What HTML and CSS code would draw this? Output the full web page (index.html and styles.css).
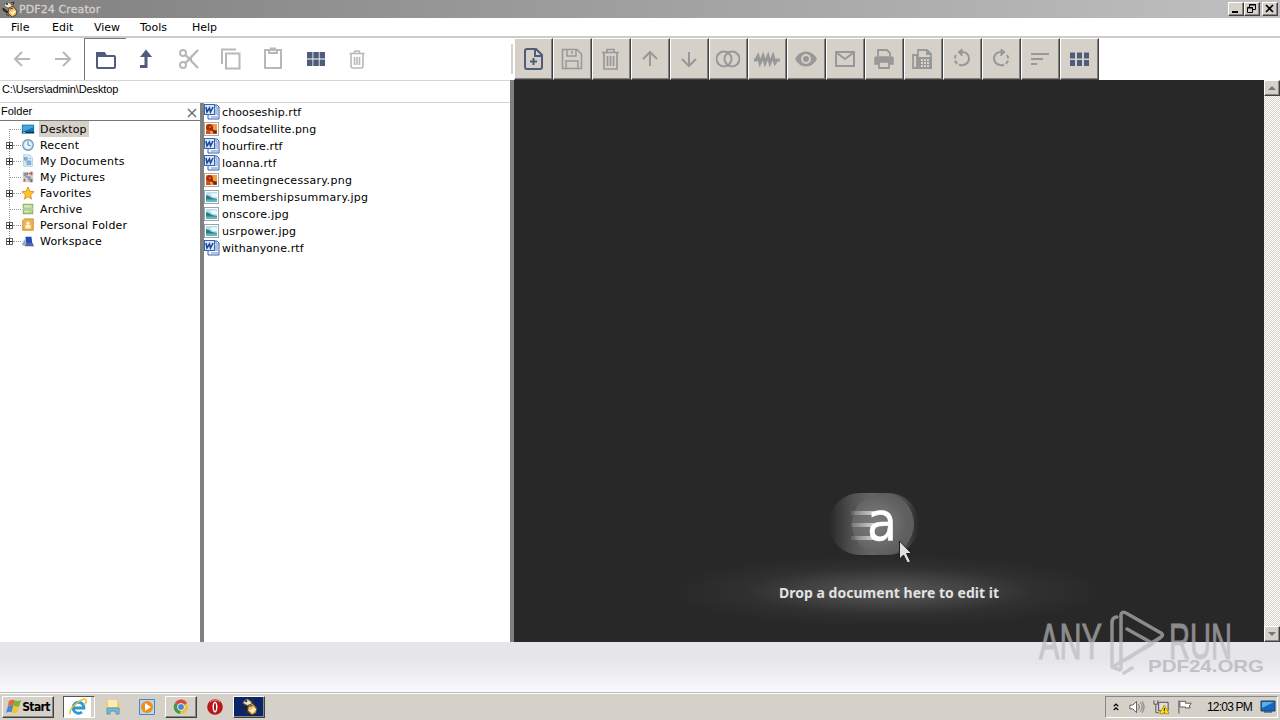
FILE: index.html
```
<!DOCTYPE html>
<html lang="en">
<head>
  <meta charset="UTF-8" />
  <title>PDF24 Creator</title>
  <link rel="stylesheet" href="styles.css">
</head>
<body>

  <!-- Shared icons -->
  <svg class="defs">
    <symbol id="bee" viewBox="0 0 16 16">
      <path d="M3 3l3-2 3 2 2 3-5 1-4-2z" fill="#eee6d5" stroke="#776b55"/>
      <path d="M7 7l4-2 4 5-1 4-4 2-4-4z" fill="#e9bd68" stroke="#65451e"/>
      <path d="M1 7l5 4-1 1-4-3zM8 8l3-1" fill="#222" stroke="#2b2118" stroke-width=".8"/>
      <circle cx="5" cy="3" r="1" fill="#222"/>
      <path d="M9 2l3-1-1 3M4 13l3 2" fill="none" stroke="#3d3023"/>
      <path d="M8 12l4-3 2 2-3 3z" fill="#fff0b4"/>
    </symbol>
    <symbol id="word" viewBox="0 0 16 16">
      <path d="M5 1h8l2 2v12H4V3z" fill="#edf4ff" stroke="#3c62a5"/>
      <path d="M12 1v3h3M11 6h3M11 8h3M11 10h3M7 13h7" fill="none" stroke="#6f91cb"/>
      <rect x=".5" y=".5" width="10" height="10" fill="#d9e7fb" stroke="#3864ae"/>
      <path d="M2 3l1 5 2.500-4 1 4L9 3" fill="none" stroke="#1d4797" stroke-width="1.500"/>
    </symbol>
    <symbol id="png" viewBox="0 0 16 16">
      <rect x=".5" y="1.5" width="14" height="13" fill="#fff" stroke="#aaa"/>
      <rect x="2" y="3" width="11" height="10" fill="#f0a13c"/>
      <circle cx="5.500" cy="6.500" r="3.5" fill="#b52b0c"/>
      <path d="M7 7l3 4M10 10h2v2h-2z" fill="#5c170b" stroke="#7b2410" stroke-width="1.5"/>
      <circle cx="6" cy="6" r="1" fill="#e5732a"/>
      <path d="M2 10l3-1 2 4H2z" fill="#d54c18"/>
    </symbol>
    <symbol id="jpg" viewBox="0 0 16 16">
      <rect x=".5" y="1.5" width="14" height="13" fill="#fff" stroke="#9ba4aa"/>
      <rect x="2" y="3" width="11" height="10" fill="#b5dff0"/>
      <path d="M2 6l3 1 3 2 5 1v1H2z" fill="#267f83"/>
      <path d="M2 10.500h11V13H2z" fill="#64b7c5"/>
      <path d="M6 5l4-1 3 1v3H9z" fill="#ecf9fc"/>
    </symbol>
    <symbol id="desk" viewBox="0 0 16 16">
      <path d="M1 3h14v10H1z" fill="#1677b5"/>
      <path d="M2 4h12v2L2 11z" fill="#45a9df"/>
      <path d="M1 12h14" stroke="#0a3965" stroke-width="2"/>
      <path d="M2 12h3" stroke="#b6e38b"/>
    </symbol>
  </svg>

  <header class="titlebar">
    <svg class="app-icon"><use href="#bee"/></svg>
    <h1>PDF24 Creator</h1>
    <div class="window-buttons">
      <button><svg viewBox="0 0 16 14"><path d="M4 10h6" stroke="#000" stroke-width="2"/></svg></button>
      <button><svg viewBox="0 0 16 14"><path d="M5.5 5V2.500h6v5H9M5 3h7M3.500 5.500h5v5h-5zM3 6h6" fill="none" stroke="#000"/></svg></button>
      <button><svg viewBox="0 0 16 14"><path d="M4 3l7 7M11 3l-7 7" stroke="#000" stroke-width="1.7"/></svg></button>
    </div>
  </header>

  <nav class="menu">
    <span>File</span><span>Edit</span><span>View</span><span>Tools</span><span>Help</span>
  </nav>

  <main class="workspace">
    <section class="browser">
      <div class="file-toolbar">
        <button class="muted"><svg viewBox="0 0 24 24"><path d="M21 12H6M13 5l-7 7 7 7"/></svg></button>
        <button class="muted"><svg viewBox="0 0 24 24"><path d="M4 12h15M12 5l7 7-7 7"/></svg></button>
        <button class="pressed"><svg viewBox="0 0 24 24"><path d="M4 5h6l2 3h8q1 0 1 1v10q0 1-1 1H4q-1 0-1-1V6q0-1 1-1z"/><path d="M3 5h7l2 3H3z" fill="currentColor"/></svg></button>
        <button><svg viewBox="0 0 24 24"><path d="M5 19.500h6V8" stroke-width="3"/><path d="M7 9l4-5 4 5z" fill="currentColor"/></svg></button>
        <button class="muted"><svg viewBox="0 0 24 24"><circle cx="6" cy="6" r="3"/><circle cx="6" cy="18" r="3"/><path d="M8.5 8L21 21M8.5 16L21 3M14 12h1" stroke-width="2.4"/></svg></button>
        <button class="muted"><svg viewBox="0 0 24 24"><path d="M3 17V2.500h14M7 6.500h13.500v15H7z"/></svg></button>
        <button class="muted"><svg viewBox="0 0 24 24"><path d="M4 3h16v18H4zM8 3v3h8V3M10 3V1.500h4V3"/></svg></button>
        <button><svg viewBox="0 0 24 24"><path d="M4 5h5.500v6.500H4zM10.300 5h5.500v6.500h-5.500zM16.600 5H22v6.500h-5.400zM4 12.500h5.500V19H4zM10.300 12.500h5.500V19h-5.500zM16.600 12.500H22V19h-5.400z" fill="currentColor" stroke="none"/></svg></button>
        <button class="muted"><svg viewBox="0 0 24 24"><path d="M4.500 6.500h15M6 7v12q0 2 2 2h8q2 0 2-2V7M9 6l1-2h4l1 2M9.500 10v8M12 10v8M14.500 10v8" stroke-width="1.6"/></svg></button>
        <i class="grip"></i>
      </div>
      <div class="path">C:\Users\admin\Desktop</div>
      <div class="panes">
        <aside class="folders">
          <div class="folder-head"><span>Folder</span><svg viewBox="0 0 10 10"><path d="M1 1l8 8M9 1L1 9" stroke="#667277" stroke-width="1.5"/></svg></div>
          <ul class="tree">
            <li class="selected"><i></i><svg><use href="#desk"/></svg><span>Desktop</span></li>
            <li class="expand"><i></i><svg viewBox="0 0 16 16"><circle cx="8" cy="8" r="6" fill="#c9e3f2" stroke="#719cb5" stroke-width="1.5"/><circle cx="8" cy="8" r="4" fill="#edf8ff"/><path d="M8 4v4l3 1" fill="none" stroke="#286a9a"/></svg><span>Recent</span></li>
            <li class="expand"><i></i><svg viewBox="0 0 16 16"><path d="M3 1h7l3 3v10H3z" fill="#d9ecf5" stroke="#b1c7d3"/><path d="M4 4h3v3H4zM7 8h4v4H7zM5 9h1M9 5h2" fill="#8ab8df" stroke="#6f9fca"/></svg><span>My Documents</span></li>
            <li><i></i><svg viewBox="0 0 16 16"><path d="M2 2h12v12H2z" fill="#d7d4cf"/><path d="M3 3h3v4H3zM8 7h3v5H8z" fill="#8096b4"/><path d="M12 2v4M7 3v3M4 10v3M12 10v4" stroke="#b66055" stroke-width="2"/><path d="M5 8h3M9 4h2M10 13h2" stroke="#476793"/></svg><span>My Pictures</span></li>
            <li class="expand"><i></i><svg viewBox="0 0 16 16"><path d="M8 1l2 5 5 .500-4 3.500 1 5-4-3-4 3 1-5-4-3.500L6 6z" fill="#ffc329" stroke="#d88e17"/></svg><span>Favorites</span></li>
            <li><i></i><svg viewBox="0 0 16 16"><path d="M2 2h12v12H2z" fill="#7fac5a"/><path d="M3 3h10v4H3z" fill="#c3dd9d"/><path d="M3 9h10v4H3z" fill="#b6d58d"/><path d="M2 8h12M4 5h5M4 11h5" stroke="#edf6df"/></svg><span>Archive</span></li>
            <li class="expand"><i></i><svg viewBox="0 0 16 16"><path d="M4 1h10v13H2V3z" fill="#edb34f" stroke="#cf8828"/><path d="M5 12V8h6v4z" fill="#fff5d8"/><circle cx="8" cy="6" r="2" fill="#fff5d8"/></svg><span>Personal Folder</span></li>
            <li class="expand"><i></i><svg viewBox="0 0 16 16"><path d="M5 3h7l1 9H6z" fill="#254bb7"/><path d="M1 12l3-6 4 7H2z" fill="#9caac0"/><path d="M4 14h11l-2-4H7z" fill="#5265a4"/></svg><span>Workspace</span></li>
          </ul>
        </aside>
        <i class="splitter"></i>
        <ul class="files">
          <li><svg><use href="#word"/></svg><span>chooseship.rtf</span></li>
          <li><svg><use href="#png"/></svg><span>foodsatellite.png</span></li>
          <li><svg><use href="#word"/></svg><span>hourfire.rtf</span></li>
          <li><svg><use href="#word"/></svg><span>loanna.rtf</span></li>
          <li class="wide"><svg><use href="#png"/></svg><span>meetingnecessary.png</span></li>
          <li class="wide"><svg><use href="#jpg"/></svg><span>membershipsummary.jpg</span></li>
          <li class="wide"><svg><use href="#jpg"/></svg><span>onscore.jpg</span></li>
          <li class="wide"><svg><use href="#jpg"/></svg><span>usrpower.jpg</span></li>
          <li><svg><use href="#word"/></svg><span>withanyone.rtf</span></li>
        </ul>
      </div>
    </section>

    <div class="main-splitter"></div>

    <section class="editor">
      <div class="edit-toolbar">
        <button class="active"><svg viewBox="0 0 24 24"><path d="M6 2h9l6 6v12q0 2-2 2H6q-2 0-2-2V4q0-2 2-2zM14 2v7h7M12.500 11v7M9 14.500h7"/></svg></button>
        <button><svg viewBox="0 0 24 24"><path d="M2.500 2.500H17l4.500 4.500v14.500h-19zM7 3v6h9V3M6 21v-7h12v7M12 4v3" stroke-width="1.500"/></svg></button>
        <button><svg viewBox="0 0 24 24"><path d="M3 5.500h17M5 5v17h13V5M8 5V2.500h7V5M8.500 9v10M11.500 9v10M14.500 9v10" stroke-width="1.700"/></svg></button>
        <button><svg viewBox="0 0 24 24"><path d="M12 19V5M5 12l7-7 7 7"/></svg></button>
        <button><svg viewBox="0 0 24 24"><path d="M12 5v14M5 12l7 7 7-7"/></svg></button>
        <button><svg viewBox="0 0 24 24"><circle cx="8" cy="12" r="7.500"/><circle cx="16" cy="12" r="7.500"/></svg></button>
        <button><svg class="wave" viewBox="0 0 28 24"><path d="M1 13h2l2-4 2 7 3-7 2 7 3-7 2 7 3-7 2 7 2-3h3" stroke-width="3"/></svg></button>
        <button><svg viewBox="0 0 24 24"><path d="M1 12q4-7.500 11-7.500T23 12q-4 7.500-11 7.500T1 12z" fill="currentColor" stroke="none"/><circle cx="12" cy="12" r="5" fill="#d5d0c8" stroke="none"/><circle cx="12" cy="12" r="3" fill="currentColor" stroke="none"/></svg></button>
        <button><svg viewBox="0 0 24 24"><path d="M3 5h18v14H3zM4 6l8 6 8-6"/></svg></button>
        <button><svg viewBox="0 0 24 24"><path d="M6 9V3h9l3 3v3M7 15v6h10v-6" stroke-width="1.800"/><path d="M3 11q0-1 1-1h16q1 0 1 1v6h-3v-2H6v2H3z" fill="currentColor" stroke-width="1.500"/></svg></button>
        <button><svg viewBox="0 0 24 24"><path d="M2 8h4v13H2zM7 10V3h9l4 4v14H7zM16 3v4h4" stroke-width="1.800"/><path d="M8 11h12v9H8z" fill="currentColor"/><path d="M10 13h8M10 16h8M10 19h8" stroke="#d5d0c8" stroke-dasharray="2 1"/></svg></button>
        <button><svg viewBox="0 0 24 24"><path d="M9 5h3a6.500 6.500 0 0 1 1 13"/><path d="M13 18A6.500 6.500 0 0 1 6 8" stroke-dasharray="4 2"/><path d="M12 2L8 5l4 4z" fill="currentColor" stroke-width="1"/></svg></button>
        <button><svg viewBox="0 0 24 24"><path d="M15 5h-3a6.500 6.500 0 0 0-1 13"/><path d="M11 18a6.500 6.500 0 0 0 7-10" stroke-dasharray="4 2"/><path d="M12 2l4 3-4 4z" fill="currentColor" stroke-width="1"/></svg></button>
        <button><svg viewBox="0 0 24 24"><path d="M3 7h18M3 12h12M3 17h6"/></svg></button>
        <button class="active"><svg viewBox="0 0 24 24"><path d="M3 5.500h5v6H3zM10 5.500h5v6h-5zM17 5.500h5v6h-5zM3 13h5v6H3zM10 13h5v6h-5zM17 13h5v6h-5z" fill="currentColor" stroke="none"/></svg></button>
      </div>
      <div class="stage">
        <div class="drop-zone">
          <svg class="drop-art" viewBox="0 0 440 150">
            <defs>
              <radialGradient id="glow"><stop offset="0" stop-color="#565656"/><stop offset=".3" stop-color="#474747"/><stop offset=".65" stop-color="#303030"/><stop offset="1" stop-color="#282828"/></radialGradient>
              <radialGradient id="orb" cx=".4"><stop offset="0" stop-color="#7d7d7d"/><stop offset=".6" stop-color="#6c6c6c"/><stop offset="1" stop-color="#5e5e5e"/></radialGradient>
              <linearGradient id="trail"><stop offset="0" stop-color="#282828"/><stop offset=".25" stop-color="#505050"/><stop offset=".5" stop-color="#686868"/><stop offset=".85" stop-color="#4a4a4a"/><stop offset="1" stop-color="#282828"/></linearGradient>
              <linearGradient id="streak"><stop offset="0" stop-color="#fff" stop-opacity=".1"/><stop offset="1" stop-color="#fff" stop-opacity=".75"/></linearGradient>
            </defs>
            <ellipse cx="229" cy="111" rx="220" ry="36" fill="url(#glow)"/>
            <rect x="169" y="13" width="90" height="62" rx="31" fill="url(#trail)"/>
            <circle cx="223" cy="44" r="31" fill="url(#orb)"/>
            <path d="M191 31h27v4h-27zM191 43h26v4h-26zM191 56h26v4h-26z" fill="url(#streak)"/>
            <text x="207" y="60" class="logo-letter" textLength="30" lengthAdjust="spacingAndGlyphs">a</text>
            <text x="119" y="118" class="drop-text" textLength="220">Drop a document here to edit it</text>
            <path d="M239.500 61v18l4-4 4 8 3-1.500-4-8h5z" fill="#e0e0e0" stroke="#202020"/>
          </svg>
        </div>
        <div class="scrollbar">
          <button><svg viewBox="0 0 16 16"><path d="M4 10l4-4 4 4z" fill="#777"/></svg></button>
          <button><svg viewBox="0 0 16 16"><path d="M4 6h8l-4 4z" fill="#777"/></svg></button>
        </div>
      </div>
    </section>
  </main>

  <div class="status"></div>

  <footer class="taskbar">
    <button class="start raised"><svg viewBox="0 0 16 16"><path d="M3 2q3-2 6-1L8 7q-3-1-6 1z" fill="#e86735"/><path d="M9 1q3 2 7 0l-2 7q-3 1-6-1z" fill="#79b43b"/><path d="M2 8q3-2 6-1l-2 7q-3-1-6 1z" fill="#4687d2"/><path d="M8 7q3 2 6 1l-2 6q-3 2-6 0z" fill="#f5c52a"/></svg><b>Start</b></button>
    <div class="quick">
      <button class="ie"><svg viewBox="0 0 20 20"><path d="M5 11h11a5.500 5.500 0 1 0-2 4" fill="none" stroke="#269bd6" stroke-width="2.800"/><path d="M2 17Q1 12 9 6t9-3q1 2-2 5" fill="none" stroke="#eabd32" stroke-width="1.500"/></svg></button>
      <button><svg viewBox="0 0 20 20"><path d="M3 4h6l1 2h7v9H3z" fill="#edcf70"/><path d="M5 3h9v7H5z" fill="#faedb4"/><path d="M4 17v-6h12v6h-3v-3H7v3z" fill="#75bde1" stroke="#4e98bc"/></svg></button>
      <button><svg viewBox="0 0 20 20"><path d="M2.500 2.500h15v15h-15z" fill="#b8d9ed" stroke="#4a87b8"/><circle cx="10" cy="10" r="6" fill="#f38b16"/><path d="M8 6l6 4-6 4z" fill="#fff"/></svg></button>
      <button class="raised chrome"><svg viewBox="0 0 20 20"><circle cx="10" cy="10" r="7" fill="#edc332"/><path d="M10 10L4 6a7 7 0 0 1 12 0z" fill="#d84b3c"/><path d="M10 10l-1 7A7 7 0 0 1 4 6z" fill="#3e9a4b"/><circle cx="10" cy="10" r="3.500" fill="#4587d4" stroke="#eee"/></svg></button>
      <button class="opera"><svg viewBox="0 0 20 20"><circle cx="10" cy="10" r="7.800" fill="#b81719"/><path d="M5 5q5-4 10 0" stroke="#ef8b81" fill="none"/><ellipse cx="10" cy="10" rx="2.500" ry="5.500" fill="#fff"/><ellipse cx="10" cy="10" rx="1" ry="4" fill="#a01014"/></svg></button>
      <button class="raised current"><svg><use href="#bee"/></svg></button>
    </div>
    <div class="tray">
      <svg class="chev" viewBox="0 0 8 12"><path d="M1 5l3-3 3 3M1 10l3-3 3 3" fill="none" stroke="#000" stroke-width="1.500"/></svg>
      <svg class="sound" viewBox="0 0 18 16"><path d="M1 6h3l4-4v12l-4-4H1z" fill="#fff" stroke="#555"/><path d="M10 5q2 3 0 6M12 3q4 5 0 10M14 2q4 6 0 12" fill="none" stroke="#777"/></svg>
      <svg class="network" viewBox="0 0 18 16"><path d="M6 3h10v9H6z" fill="#ddd" stroke="#444"/><path d="M1 1v4h4V1M3 5v9h3" fill="none" stroke="#555"/><path d="M12 6l5 9H7z" fill="#ffdf28" stroke="#b69a00"/><path d="M12 9v3M12 13v1" stroke="#000"/></svg>
      <svg class="flag" viewBox="0 0 18 16"><path d="M2 1v14M3 2h6v2h6l-2 3 1 2H9V8H3z" fill="#fff" stroke="#555"/></svg>
      <span>12:03 PM</span>
      <svg class="show-desk" viewBox="0 0 16 16"><path d="M1 2h14v10H1z" fill="#1566bd" stroke="#24415f"/><path d="M2 3h12L2 9z" fill="#5bafe9"/><path d="M4 13h8" stroke="#0a346b"/></svg>
    </div>
  </footer>

  <!-- Watermark over the document and status areas -->
  <svg class="watermark" viewBox="0 0 240 80">
    <g class="mark">
      <text x="9" y="54" textLength="63" lengthAdjust="spacingAndGlyphs">ANY</text>
      <text x="139" y="54" textLength="63" lengthAdjust="spacingAndGlyphs">RUN</text>
      <path d="M87 12q-5 0-5 6v44l8 3M91 64V10q0-4 5-2l35 20q3 2 0 4L98 53M97 24l25 14M122 39L84 61M130 33L97 54M94 68l8-5" fill="none" stroke="#bbb" stroke-width="3.500" stroke-linecap="round" stroke-linejoin="round"/>
    </g>
    <text x="118" y="67" class="site" textLength="116" lengthAdjust="spacingAndGlyphs">PDF24.ORG</text>
  </svg>

</body>
</html>
```
FILE: styles.css
```
* {
  box-sizing: border-box;
}

body {
  margin: 0;
  width: 1280px;
  height: 720px;
  overflow: hidden;
  display: flex;
  flex-direction: column;
  background: #fff;
  color: #000;
  font-family: "DejaVu Sans", sans-serif;
  font-size: 11px;
}

button {
  border: 0;
  padding: 0;
  background: transparent;
  font: inherit;
  display: flex;
  align-items: center;
  justify-content: center;
}

svg {
  display: block;
  flex: none;
}

ul {
  margin: 0;
  padding: 0;
  list-style: none;
}

.defs {
  display: none;
}

.titlebar {
  height: 18px;
  flex: none;
  display: flex;
  align-items: center;
  background: linear-gradient(90deg, #808080, #c0c0c0);
}

.app-icon {
  width: 16px;
  height: 16px;
  margin-left: 2px;
}

.titlebar h1 {
  margin: 0 auto 0 1px;
  color: #d5d1c9;
  font-size: 11px;
  font-weight: normal;
  letter-spacing: .1px;
  -webkit-text-stroke: .3px #d5d1c9;
}

.window-buttons {
  display: flex;
  margin-right: 2px;
}

.window-buttons button,
.scrollbar button,
.raised {
  background: #d5d0c8;
  border: 1px solid;
  border-color: #fff #404040 #404040 #fff;
  box-shadow: inset -1px -1px #888;
}

.window-buttons button {
  width: 16px;
  height: 14px;
}

.window-buttons button:last-child {
  margin-left: 2px;
}

.window-buttons svg {
  width: 16px;
  height: 14px;
}

.menu {
  height: 20px;
  flex: none;
  display: flex;
  align-items: center;
  gap: 22px;
  padding-left: 11px;
  border-bottom: 2px solid #ccc;
}

.menu span:nth-child(1) { width: 19px; }
.menu span:nth-child(2) { width: 20px; }
.menu span:nth-child(3) { width: 24px; }
.menu span:nth-child(4) { width: 30px; }

.workspace {
  height: 604px;
  flex: none;
  display: flex;
}

.browser {
  width: 510px;
  display: flex;
  flex-direction: column;
}

.file-toolbar {
  height: 43px;
  width: 514px;
  flex: none;
  display: flex;
  align-items: center;
  border-bottom: 1px solid #d5d5d5;
}

.file-toolbar button {
  width: 42px;
  height: 42px;
  color: #505c7b;
}

.file-toolbar svg,
.edit-toolbar svg {
  width: 24px;
  height: 24px;
  fill: none;
  stroke: currentColor;
  stroke-width: 2;
}

.file-toolbar .muted {
  color: #b8b8b8;
}

.file-toolbar .pressed {
  border-left: 1px solid #777;
  border-top: 1px solid #777;
}

.grip {
  width: 2px;
  height: 30px;
  margin-left: auto;
  margin-right: 1px;
  background: #d4d4d4;
}

.path {
  height: 22px;
  flex: none;
  padding: 1px 2px;
  border-bottom: 1px solid #d5d5d5;
  font-family: "Liberation Sans", Arial, sans-serif;
  line-height: 14px;
  letter-spacing: -.14px;
}

.panes {
  flex: 1;
  display: flex;
}

.folders {
  width: 200px;
}

.folder-head {
  height: 18px;
  display: flex;
  justify-content: space-between;
  padding: 1px 3px 0 1px;
  border-bottom: 1px solid #777;
  font-family: "Liberation Sans", Arial, sans-serif;
  line-height: 15px;
}

.folder-head svg {
  width: 10px;
  height: 10px;
  margin-top: 4px;
}

.tree {
  padding-left: 9px;
  background: repeating-linear-gradient(#999 0 1px, transparent 1px 2px) 9px 8px / 1px 112px no-repeat;
}

.tree li {
  height: 16px;
  display: flex;
  align-items: center;
}

.tree i {
  width: 12px;
  border-top: 1px dotted #999;
}

.tree .expand::before {
  content: "";
  box-sizing: border-box;
  width: 7px;
  height: 7px;
  margin-left: -3px;
  border: 1px solid #666;
  background:
    linear-gradient(#222, #222) center / 5px 1px no-repeat,
    linear-gradient(#222, #222) center / 1px 5px no-repeat,
    #fff;
}

.tree .expand i {
  width: 8px;
}

.tree svg {
  width: 14px;
  height: 14px;
}

.tree span {
  margin-left: 4px;
  padding: 2px 2px 0 1px;
  line-height: 14px;
  letter-spacing: .2px;
}

.tree .selected span {
  background: #d5d0c8;
}

.splitter {
  width: 4px;
  background: #808080;
}

.files li {
  height: 17px;
  display: flex;
  align-items: center;
  gap: 2px;
  letter-spacing: .1px;
}

.files .wide {
  letter-spacing: .3px;
}

.files span {
  padding-top: 2px;
}

.files svg {
  width: 16px;
  height: 16px;
}

.main-splitter {
  width: 4px;
  margin-top: 42px;
  background: #808080;
}

.editor {
  flex: 1;
  display: flex;
  flex-direction: column;
}

.edit-toolbar {
  height: 42px;
  display: flex;
}

.edit-toolbar button {
  width: 39px;
  height: 42px;
  padding-right: 1px;
  background: #d5d0c8;
  border: 1px solid;
  border-color: #fff #404040 #404040 #fff;
  box-shadow: inset -1px -1px #808080;
  color: #989898;
}

.edit-toolbar .active {
  color: #505c7b;
}

.edit-toolbar .wave {
  width: 28px;
}

.stage {
  flex: 1;
  display: flex;
  background: #282828;
}

.drop-zone {
  flex: 1;
  padding: 400px 0 0 146px;
}

.drop-art {
  width: 440px;
  height: 150px;
}

.logo-letter {
  fill: #fff;
  stroke: #fff;
  stroke-width: .5px;
  font: 53px "DejaVu Sans", sans-serif;
}

.drop-text {
  fill: #e2e2e2;
  font: bold 14px "Noto Sans", sans-serif;
}

.scrollbar {
  width: 16px;
  display: flex;
  flex-direction: column;
  justify-content: space-between;
  background: repeating-conic-gradient(#d5d0c8 0 25%, #fff 0 50%) 0 0 / 2px 2px;
}

.scrollbar button {
  width: 16px;
  height: 16px;
}

.scrollbar svg {
  width: 16px;
  height: 16px;
}

.status {
  height: 50px;
  flex: none;
  background: linear-gradient(#e5e5ea 0 35%, #fafafc);
}

.taskbar {
  height: 28px;
  display: flex;
  align-items: center;
  padding: 1px 2px 0;
  background: #d5d0c8;
  box-shadow: inset 0 1px #bbb, inset 0 2px #fff;
}

.start {
  width: 52px;
  height: 22px;
}

.start svg {
  width: 15px;
  height: 15px;
  margin-right: 1px;
}

.start b {
  font-family: "DejaVu Sans Condensed", "DejaVu Sans", sans-serif;
  font-size: 12px;
  letter-spacing: -.6px;
}

.quick {
  display: flex;
  align-items: center;
  margin-left: 9px;
}

.quick button {
  width: 32px;
  height: 22px;
  margin-right: 2px;
}

.quick svg {
  width: 20px;
  height: 20px;
}

.quick .ie {
  padding-right: 3px;
  border: 1px solid;
  border-color: #555 #fff #fff #555;
  background: #fff;
  box-shadow: inset -3px 0 #d5d0c8;
}

.quick .current {
  background: #0a246a;
}

.quick .current svg {
  width: 17px;
  height: 17px;
}

.tray {
  width: 173px;
  height: 22px;
  margin-left: auto;
  display: flex;
  align-items: center;
  padding-left: 7px;
  border: 1px solid;
  border-color: #888 #fff #fff #888;
  font-family: "Liberation Sans", Arial, sans-serif;
  font-size: 12px;
}

.tray .chev {
  width: 6px;
  height: 10px;
  margin-right: 10px;
}

.tray .sound,
.tray .network,
.tray .flag {
  width: 17px;
  height: 16px;
  margin-right: 7px;
}

.tray span {
  width: 45px;
  margin-left: 6px;
  white-space: nowrap;
  letter-spacing: -.8px;
}

.tray .show-desk {
  width: 16px;
  height: 16px;
  margin-left: 8px;
}

.watermark {
  position: absolute;
  left: 1030px;
  top: 605px;
  width: 240px;
  height: 80px;
  overflow: visible;
  pointer-events: none;
}

.mark {
  opacity: .68;
}

.mark text {
  fill: #bbb;
  stroke: #bbb;
  stroke-width: 1px;
  font: 50px "Liberation Sans", Arial, sans-serif;
}

.site {
  fill: #c1c1c5;
  font: bold 17px "Liberation Sans", Arial, sans-serif;
}
```
